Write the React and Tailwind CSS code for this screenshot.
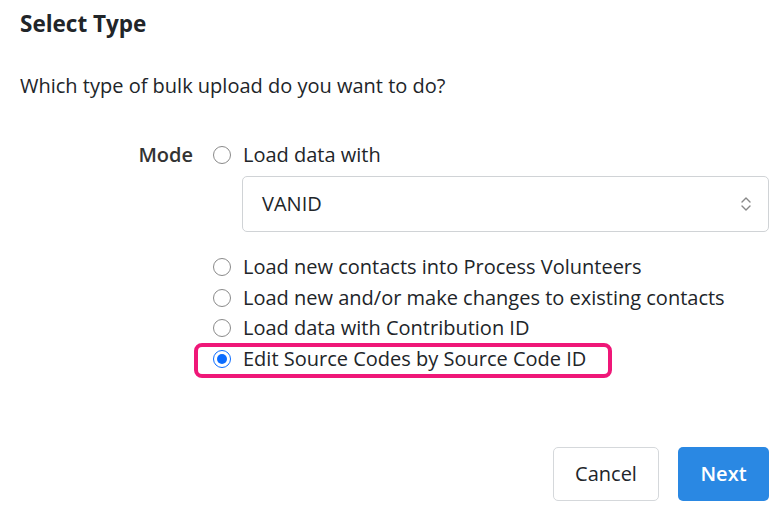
import React, { useState } from 'react';

const options = [
  'Load new contacts into Process Volunteers',
  'Load new and/or make changes to existing contacts',
  'Load data with Contribution ID',
  'Edit Source Codes by Source Code ID',
];

const Radio = ({ checked, onChange }) => (
  <span
    onClick={onChange}
    className={`flex h-[18px] w-[18px] shrink-0 items-center justify-center rounded-full ${
      checked ? 'border-[1.5px] border-[#0b6cff]' : 'border border-[#8a8a8a]'
    } bg-white`}
  >
    {checked && <span className="h-[10px] w-[10px] rounded-full bg-[#0b6cff]" />}
  </span>
);

export default function App() {
  const [mode, setMode] = useState(4);

  return (
    <div
      className="h-[513px] w-[781px] bg-white text-[#212529]"
      style={{ fontFamily: '"Open Sans", "Noto Sans", sans-serif' }}
    >
      <div className="pl-5 pr-[12px] pt-[10px]">
        <h2 className="text-[22.5px] font-bold leading-[28px]">Select Type</h2>
        <p className="mt-[34px] text-[20px] leading-[28px]">Which type of bulk upload do you want to do?</p>

        <div className="mt-[40px] flex">
          <div className="w-[193px] shrink-0 pr-[20px] text-right text-[20px] font-semibold leading-[30px] text-[#333]">
            Mode
          </div>
          <div className="flex-1">
            <label className="flex h-[30px] items-center gap-[12px] text-[20px]" onClick={() => setMode(0)}>
              <Radio checked={mode === 0} />
              <span>Load data with</span>
            </label>
            <div className="ml-[29px] mt-[6px] flex h-[56px] items-center justify-between rounded-[5px] border border-[#d0d3d6] pl-[19px] pr-[16px]">
              <span className="text-[20px]">VANID</span>
              <svg width="12" height="18" viewBox="0 0 12 18" fill="none" stroke="#888" strokeWidth="1.4" strokeLinecap="round" strokeLinejoin="round">
                <path d="M2 7 L6 3 L10 7" />
                <path d="M2 11 L6 15 L10 11" />
              </svg>
            </div>
            <div className="relative mt-[20px] flex flex-col">
              {options.map((o, i) => (
                <label
                  key={o}
                  className="flex h-[30.5px] items-center gap-[12px] text-[20px] leading-none"
                  onClick={() => setMode(i + 1)}
                >
                  <Radio checked={mode === i + 1} />
                  <span>{o}</span>
                </label>
              ))}
              <div className="pointer-events-none absolute left-[-19px] top-[91px] h-[35px] w-[418px] rounded-[8px] border-[4px] border-[#ef1778]" />
            </div>
          </div>
        </div>
      </div>

      <div className="mt-[73px] flex justify-end gap-[19px] pr-[12px]">
        <button className="h-[54px] w-[106px] rounded-[5px] border border-[#d5d8db] bg-white text-[20px] text-[#212529]">
          Cancel
        </button>
        <button className="h-[54px] w-[91px] rounded-[5px] bg-[#2a88e3] text-[20px] font-semibold text-white">
          Next
        </button>
      </div>
    </div>
  );
}
